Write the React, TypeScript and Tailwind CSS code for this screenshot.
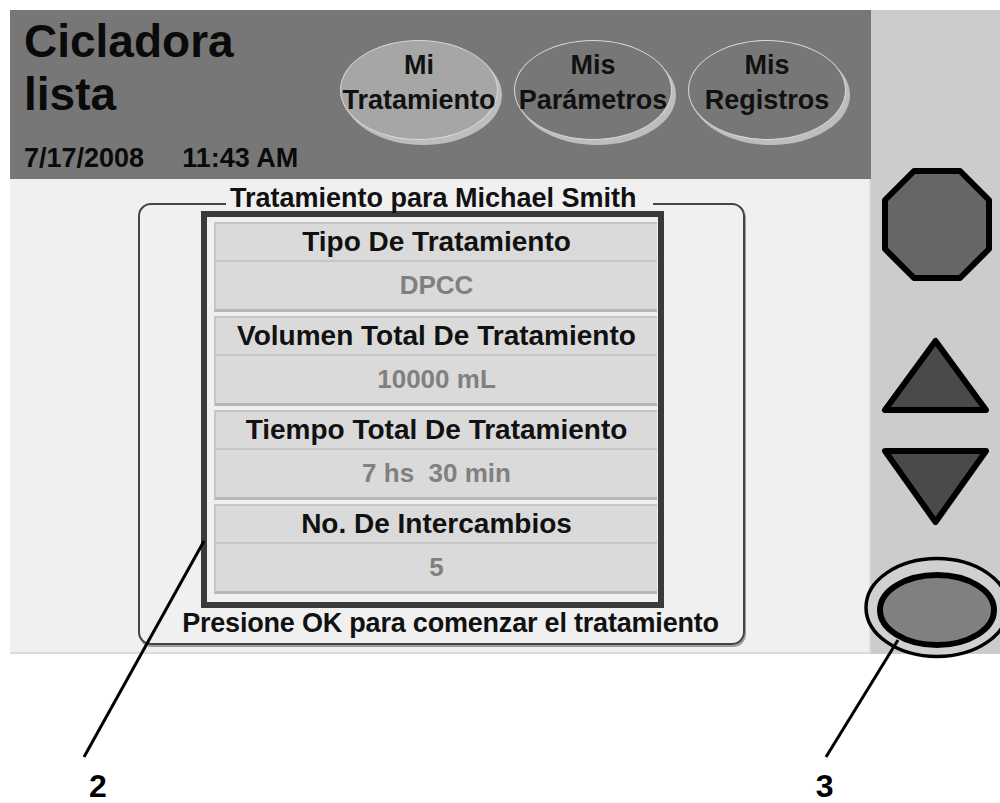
import React from "react";

const groups: [string, string][] = [
  ["Tipo De Tratamiento", "DPCC"],
  ["Volumen Total De Tratamiento", "10000 mL"],
  ["Tiempo Total De Tratamiento", "7 hs\u00A0 30 min"],
  ["No. De Intercambios", "5"],
];

function Oval({ top, bottom, selected }: { top: string; bottom: string; selected?: boolean }) {
  return (
    <div
      className={`w-[158px] h-[100px] rounded-[50%] border border-[#d8d8d8] shadow-[4px_5px_0_#bdbdbd] flex flex-col items-center justify-center pb-[14px] text-[27px] leading-[35px] font-bold text-[#111111] ${
        selected ? "bg-[#a6a6a6]" : "bg-[#777777]"
      }`}
    >
      <span>{top}</span>
      <span className="whitespace-nowrap">{bottom}</span>
    </div>
  );
}

export default function App() {
  return (
    <div className="relative w-[1000px] h-[803px] bg-white overflow-hidden font-['Liberation_Sans',Arial,Helvetica,sans-serif]">
      <div className="flex pt-[10px] pl-[10px]">
        {/* Left screen */}
        <div className="w-[861px] flex flex-col">
          {/* Header */}
          <div className="h-[169px] bg-[#777777] flex">
            <div className="w-[330px] pl-[14px] pt-[5px] flex flex-col">
              <div className="text-[46px] leading-[53px] font-bold text-[#0a0a0a]">
                <div>Cicladora</div>
                <div>lista</div>
              </div>
              <div className="mt-[22px] text-[27px] leading-[30px] font-bold text-[#0a0a0a] whitespace-nowrap">
                <span>7/17/2008</span>
                <span className="ml-[38px]">11:43 AM</span>
              </div>
            </div>
            <div className="pt-[30px] flex gap-[16px]">
              <Oval top="Mi" bottom="Tratamiento" selected />
              <Oval top="Mis" bottom="Parámetros" />
              <Oval top="Mis" bottom="Registros" />
            </div>
          </div>
          {/* Content */}
          <div className="h-[475px] bg-[#f0f0f0] border-b-2 border-r-2 border-[#dcdcdc] pl-[128px] pt-[24px]">
            <div className="relative w-[607px] border-2 border-[#444444] rounded-[13px] shadow-[1px_2px_0_#9c9c9c] pt-[6px] pl-[61px] pb-[7px] flex flex-col">
              <span className="absolute left-[86px] top-[-20px] bg-[#f0f0f0] pl-[4px] pr-[16px] text-[27px] leading-[26px] font-bold text-[#111111] whitespace-nowrap">
                Tratamiento para Michael Smith
              </span>
              <div className="w-[463px] border-[6px] border-[#3a3a3a] pt-[5px] pl-[7px] pr-[1px] pb-[8px] flex flex-col gap-[4px]">
                {groups.map(([h, v]) => (
                  <div
                    key={h}
                    className="flex flex-col bg-[#dadada] border-t-2 border-l-2 border-[#c6c6c6] border-b-[3px] border-b-[#b6b6b6]"
                  >
                    <div className="h-[36px] flex items-center justify-center text-[28px] font-bold text-[#111111] whitespace-nowrap">
                      {h}
                    </div>
                    <div className="h-[49px] border-t-2 border-[#c6c6c6] flex items-center justify-center text-[26px] font-bold text-[#808080] whitespace-pre">
                      {v}
                    </div>
                  </div>
                ))}
              </div>
              <div className="mt-[2px] -ml-[61px] pl-[18px] text-center text-[27px] leading-[26px] font-bold tracking-[-0.2px] text-[#111111] whitespace-nowrap">
                Presione OK para comenzar el tratamiento
              </div>
            </div>
          </div>
        </div>
        {/* Right control panel */}
        <div className="w-[129px] h-[644px] bg-[#cccccc] flex flex-col pl-[8px]">
          <svg className="mt-[155px]" width="116" height="119" viewBox="0 0 116 119">
            <polygon
              points="35,6 81,6 110,35 110,84 81,113 35,113 6,84 6,35"
              fill="#666666"
              stroke="#000"
              strokeWidth="6"
              strokeLinejoin="round"
            />
          </svg>
          <svg className="mt-[51px]" width="114" height="82" viewBox="0 0 114 82">
            <polygon points="6,75 107,75 56.5,6" fill="#4a4a4a" stroke="#000" strokeWidth="6" strokeLinejoin="round" />
          </svg>
          <svg className="mt-[28px]" width="114" height="84" viewBox="0 0 114 84">
            <polygon points="6,6 107,6 56.5,77" fill="#4a4a4a" stroke="#000" strokeWidth="6" strokeLinejoin="round" />
          </svg>
        </div>
      </div>

      {/* OK button (overlaps panel edge) */}
      <svg className="absolute left-[862px] top-[554px]" width="138" height="108" viewBox="0 0 138 108">
        <ellipse cx="75" cy="53.5" rx="71" ry="49" fill="#d0d0d0" stroke="#000" strokeWidth="3.5" />
        <ellipse cx="75" cy="56" rx="57" ry="35" fill="#808080" stroke="#000" strokeWidth="6" />
      </svg>

      {/* Callout lines */}
      <svg className="absolute left-0 top-0 pointer-events-none" width="1000" height="803" viewBox="0 0 1000 803">
        <line x1="204" y1="541" x2="84" y2="757" stroke="#000" strokeWidth="3" />
        <line x1="898" y1="640" x2="826" y2="757" stroke="#000" strokeWidth="3" />
      </svg>

      {/* Callout labels */}
      <div className="flex pl-[89px] mt-[118px] text-[32px] leading-[28px] font-bold text-black">
        <span>2</span>
        <span className="ml-[709px]">3</span>
      </div>
    </div>
  );
}
